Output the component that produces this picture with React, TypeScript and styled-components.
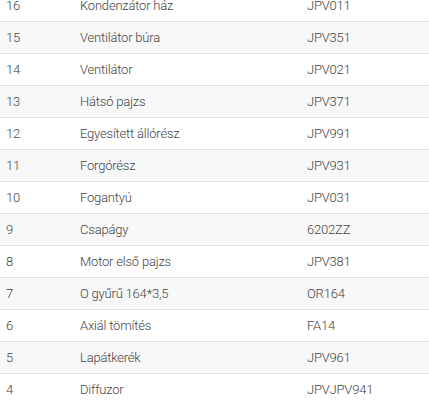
import React from 'react';
import styled, { createGlobalStyle } from 'styled-components';

const GlobalStyle = createGlobalStyle`
  body {
    margin: 0;
    background: #ffffff;
    font-family: Roboto, "Liberation Sans", sans-serif;
  }
`;

const Table = styled.div`
  display: flex;
  flex-direction: column;
  width: 100%;
  margin-top: -10px;
  overflow: hidden;
`;

const Row = styled.div<{ $striped: boolean }>`
  display: grid;
  grid-template-columns: 80px 227px 1fr;
  align-items: center;
  height: 32px;
  box-sizing: border-box;
  border-bottom: 1px solid #e2e2e2;
  background-color: ${p => (p.$striped ? '#f8f8f8' : '#ffffff')};
  color: #444444;
  font-size: 13px;
  font-weight: 300;
  letter-spacing: -0.2px;
`;

const Cell = styled.div<{ $first?: boolean }>`
  padding-left: ${p => (p.$first ? '6px' : '0')};
  white-space: nowrap;
`;

const parts = [
  ['16', 'Kondenzátor ház', 'JPV011'],
  ['15', 'Ventilátor búra', 'JPV351'],
  ['14', 'Ventilátor', 'JPV021'],
  ['13', 'Hátsó pajzs', 'JPV371'],
  ['12', 'Egyesített állórész', 'JPV991'],
  ['11', 'Forgórész', 'JPV931'],
  ['10', 'Fogantyú', 'JPV031'],
  ['9', 'Csapágy', '6202ZZ'],
  ['8', 'Motor első pajzs', 'JPV381'],
  ['7', 'O gyűrű 164*3,5', 'OR164'],
  ['6', 'Axiál tömítés', 'FA14'],
  ['5', 'Lapátkerék', 'JPV961'],
  ['4', 'Diffuzor', 'JPVJPV941'],
];

const App: React.FC = () => {
  return (
    <>
      <GlobalStyle />
      <Table>
        {parts.map(([no, name, code], i) => (
          <Row key={no} $striped={i % 2 === 1}>
            <Cell $first>{no}</Cell>
            <Cell>{name}</Cell>
            <Cell>{code}</Cell>
          </Row>
        ))}
      </Table>
    </>
  );
};

export default App;
